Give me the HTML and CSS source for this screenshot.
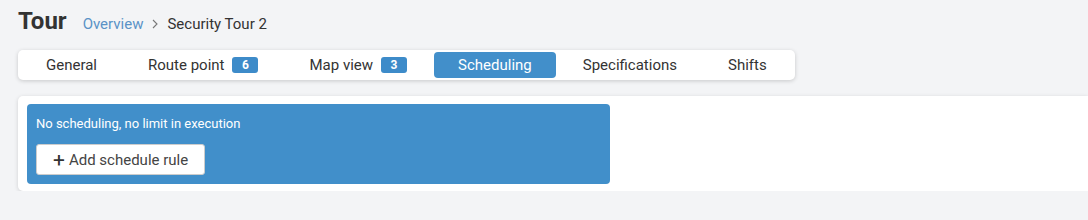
FILE: index.html
```html
<!DOCTYPE html>
<html lang="en">
<head>
    <meta charset="UTF-8">
    <title>Tour - Scheduling</title>
    <link rel="stylesheet" href="styles.css">
</head>
<body>
    <div class="header">
        <h1 class="title">Tour</h1>
        <div class="breadcrumb">
            <a class="crumb-link" href="#">Overview</a>
            <svg class="crumb-sep" width="8" height="10" viewBox="0 0 8 10">
                <path d="M2 1l4 4-4 4" fill="none" stroke="#777" stroke-width="1.1"/>
            </svg>
            <span class="crumb-current">Security Tour 2</span>
        </div>
    </div>

    <div class="tabs">
        <div class="tab">General</div>
        <div class="tab">Route point <span class="badge">6</span></div>
        <div class="tab">Map view <span class="badge">3</span></div>
        <div class="tab active">Scheduling</div>
        <div class="tab">Specifications</div>
        <div class="tab">Shifts</div>
    </div>

    <div class="panel">
        <div class="schedule-box">
            <div class="schedule-text">No scheduling, no limit in execution</div>
            <button class="add-btn"><span class="plus">+</span>Add schedule rule</button>
        </div>
    </div>
</body>
</html>
```

FILE: styles.css
```css
body {
    margin: 0;
    background-color: #f3f4f6;
    font-family: 'Roboto', 'Liberation Sans', sans-serif;
    color: #333;
    overflow: hidden;
}

/* Шапка */
.header {
    display: flex;
    align-items: baseline;
    padding: 7px 18px 0;
}

.title {
    margin: 0;
    font-size: 24px;
    line-height: 28px;
    font-weight: bold;
    color: #333;
}

.breadcrumb {
    display: flex;
    align-items: baseline;
    margin-left: 16px;
    font-size: 15px;
}

.crumb-link {
    color: #5a92c6;
    text-decoration: none;
}

.crumb-sep {
    margin: 0 8px 0 8px;
}

.crumb-current {
    color: #333;
}

/* Вкладки */
.tabs {
    display: inline-flex;
    gap: 3px;
    margin: 15px 0 0 18px;
    padding: 2px 4px;
    background-color: #fff;
    border-radius: 5px;
    box-shadow: 0 1px 4px rgba(0, 0, 0, 0.18);
}

.tab {
    display: flex;
    align-items: center;
    height: 26px;
    padding: 0 24px;
    font-size: 15px;
    color: #333;
    border-radius: 4px;
}

.tab.active {
    background-color: #428fca;
    color: #fff;
}

.badge {
    display: inline-flex;
    align-items: center;
    justify-content: center;
    width: 26px;
    height: 16px;
    margin-left: 8px;
    background-color: #3d8bc9;
    color: #fff;
    font-size: 12px;
    font-weight: bold;
    border-radius: 3px;
}

/* Панель */
.panel {
    margin: 16px 0 0 18px;
    padding: 8px 9px 7px;
    background-color: #fff;
    border-radius: 5px 0 0 5px;
    box-shadow: 0 1px 4px rgba(0, 0, 0, 0.15);
}

.schedule-box {
    width: 565px;
    padding: 12px 9px 9px;
    background-color: #418fca;
    border-radius: 4px;
}

.schedule-text {
    color: #fff;
    font-size: 13px;
    line-height: 16px;
    margin-bottom: 12px;
}

.add-btn {
    display: flex;
    align-items: center;
    height: 31px;
    padding: 0 16px;
    background-color: #fff;
    border: 1px solid #ccc;
    border-radius: 3px;
    font-family: inherit;
    font-size: 15px;
    color: #444;
}

.plus {
    font-size: 21px;
    line-height: 20px;
    margin-right: 4px;
    color: #333;
}
```
